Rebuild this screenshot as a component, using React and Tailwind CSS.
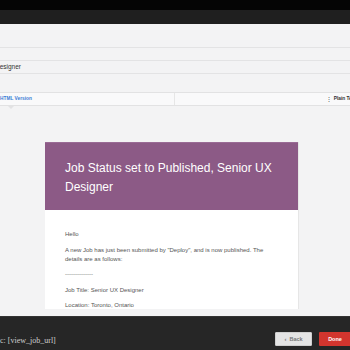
export default function App() {
  const sans = { fontFamily: '"Liberation Sans", Arial, sans-serif' };
  return (
    <div className="w-[350px] h-[350px] overflow-hidden flex flex-col bg-[#f3f3f4]" style={sans}>
      <div className="h-[10px] bg-[#050505] shrink-0" />
      <div className="h-[14px] bg-[#1f1f1f] shrink-0" />
      <div className="h-[285px] shrink-0 overflow-hidden flex flex-col bg-[#f3f3f4]">
        <div className="h-[24px] border-b border-[#e3e3e4] shrink-0" />
        <div className="h-[13px] border-b border-[#e3e3e4] shrink-0" />
        <div className="h-[13px] border-b border-[#e3e3e4] shrink-0 flex items-center overflow-hidden">
          <span className="-ml-[5px] text-[6.5px] text-[#333]">Designer</span>
        </div>
        <div className="h-[18px] shrink-0" />
        <div className="h-[14px] shrink-0 border-y border-[#e2e2e3] bg-[#f9f9fa] flex overflow-hidden">
          <div className="w-[175px] flex items-center border-r border-[#e6e6e6]">
            <span className="text-[4.8px] font-bold text-[#3a7bd5] whitespace-nowrap">HTML Version</span>
          </div>
          <div className="flex-1 flex items-center justify-end overflow-hidden">
            <span className="text-[6px] text-[#444] mr-[2px] leading-none">⋮</span>
            <span className="text-[4.8px] font-bold text-[#333] whitespace-nowrap -mr-[6px]">Plain Text</span>
          </div>
        </div>
        <div className="h-[36px] shrink-0 pl-[8px]">
          <div className="w-0 h-0 border-l-[3px] border-r-[3px] border-t-[3px] border-l-transparent border-r-transparent border-t-[#e2e2e3]" />
        </div>
        <div className="ml-[45px] w-[253px] shrink-0 bg-white shadow-[1px_0_0_#e6e6e6]">
          <div className="bg-[#8c5a86] pt-[16px] pb-[14px] px-[20px] border-t border-[#9a6b95]">
            <div className="text-white text-[12px] leading-[18.5px] font-normal">
              Job Status set to Published, Senior UX Designer
            </div>
          </div>
          <div className="px-[20px] pt-[20px] pb-[20px] text-[6px] leading-[9px] text-[#555]">
            <p>Hello</p>
            <p className="mt-[6.5px]">
              A new Job has just been submitted by "Deploy", and is now published. The
              <br />
              details are as follows:
            </p>
            <p className="mt-[6.5px] text-[#666]">--------------</p>
            <p className="mt-[6.5px]">Job Title: Senior UX Designer</p>
            <p className="mt-[6.5px]">Location: Toronto, Ontario</p>
          </div>
        </div>
      </div>
      <div className="h-[7px] shrink-0 bg-[#f3f3f4]" />
      <div className="h-[34px] shrink-0 bg-[#262626] border-t border-[#333] flex items-end justify-between pb-[4px]">
        <span
          className="text-[8px] text-[#cfcfcf] mb-[-1px] whitespace-nowrap"
          style={{ fontFamily: '"Liberation Serif", "Times New Roman", serif' }}
        >
          c: [view_job_url]
        </span>
        <div className="flex gap-[7px] items-center -mr-[1px]">
          <button className="w-[37px] h-[14px] bg-[#e4e4e4] border border-[#cfcfcf] rounded-[1px] text-[5.5px] font-bold text-[#777] flex items-center justify-center gap-[3px]">
            <span className="text-[6px]">‹</span>
            <span>Back</span>
          </button>
          <button className="w-[32px] h-[14px] bg-[#d2352e] rounded-[1px] text-[5.5px] font-bold text-white flex items-center justify-center">
            Done
          </button>
        </div>
      </div>
    </div>
  );
}
